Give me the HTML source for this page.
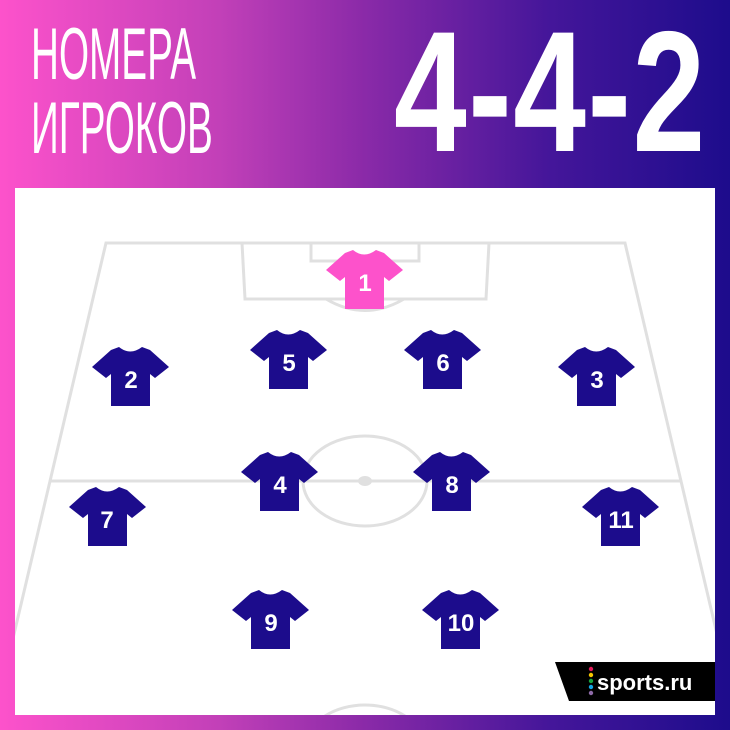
<!DOCTYPE html>
<html><head><meta charset="utf-8"><style>
html,body{margin:0;padding:0;overflow:hidden;width:730px;height:730px}
body{position:relative;background:linear-gradient(90deg,#fd52cb 0%,#c240b8 30%,#8a2aa8 50%,#45169a 75%,#1d0c8c 100%);font-family:"Liberation Sans",sans-serif}
.t{position:absolute;color:#fff;font-family:"Liberation Sans Narrow","Liberation Sans",sans-serif;transform-origin:0 0;white-space:nowrap;line-height:1}
.panel{position:absolute;left:15px;top:188px;width:700px;height:527px;background:#fff;overflow:hidden}
</style></head><body>
<div class="t" style="left:31px;top:18px;font-size:73px;transform:scaleX(0.53)">НОМЕРА</div>
<div class="t" style="left:31px;top:92px;font-size:73px;transform:scaleX(0.53)">ИГРОКОВ</div>
<div class="t" style="left:394px;top:6px;font-size:172px;font-weight:bold;transform:scaleX(0.76);letter-spacing:2px">4-4-2</div>
<div class="panel">
<svg width="700" height="527" viewBox="15 188 700 527" style="position:absolute;left:0;top:0">
<g fill="none" stroke="#e0e0e0" stroke-width="3">
<polyline points="-5,715 106,243 625,243 736,715"/>
<line x1="50" y1="481" x2="680" y2="481"/>
<ellipse cx="365" cy="481" rx="62" ry="45"/>
<polyline points="242,243 245,299 486,299 489,243"/>
<polyline points="311,243 311,261 419,261 419,243"/>
<path d="M326,299 Q365,322 404,299"/>
<ellipse cx="365" cy="745" rx="58" ry="40"/>
</g>
<ellipse cx="365" cy="481" rx="7" ry="5" fill="#e0e0e0"/>
<defs><path id="s" d="M27,0 Q38,9 50,0 L58,3 L77,20 L63,31 L58,27 L58,59 L19,59 L19,27 L14,31 L0,20 L19,3 Z"/></defs>
<g fill="#1c0c8c">
<use href="#s" x="92" y="347"/>
<use href="#s" x="250" y="330"/>
<use href="#s" x="404" y="330"/>
<use href="#s" x="558" y="347"/>
<use href="#s" x="241" y="452"/>
<use href="#s" x="413" y="452"/>
<use href="#s" x="69" y="487"/>
<use href="#s" x="582" y="487"/>
<use href="#s" x="232" y="590"/>
<use href="#s" x="422" y="590"/>
</g>
<use href="#s" x="326" y="250" fill="#fd52cb"/>
<g fill="#fff" font-family="Liberation Sans,sans-serif" font-weight="bold" font-size="24" text-anchor="middle">
<text x="365" y="291">1</text>
<text x="131" y="388">2</text>
<text x="289" y="371">5</text>
<text x="443" y="371">6</text>
<text x="597" y="388">3</text>
<text x="280" y="493">4</text>
<text x="452" y="493">8</text>
<text x="107" y="528">7</text>
<text x="621" y="528">11</text>
<text x="271" y="631">9</text>
<text x="461" y="631">10</text>
</g>
<polygon points="555,662 715,662 715,701 569,701" fill="#000"/>
<g><circle cx="591" cy="669" r="2.2" fill="#e5185a"/><circle cx="591" cy="675" r="2.2" fill="#f5c400"/><circle cx="591" cy="681" r="2.2" fill="#16a53c"/><circle cx="591" cy="687" r="2.2" fill="#12a5e5"/><circle cx="591" cy="693" r="2.2" fill="#8e6aa8"/></g>
<text x="597" y="690" fill="#fff" font-family="Liberation Sans,sans-serif" font-weight="bold" font-size="22">sports.ru</text>
</svg>
</div>
</body></html>
